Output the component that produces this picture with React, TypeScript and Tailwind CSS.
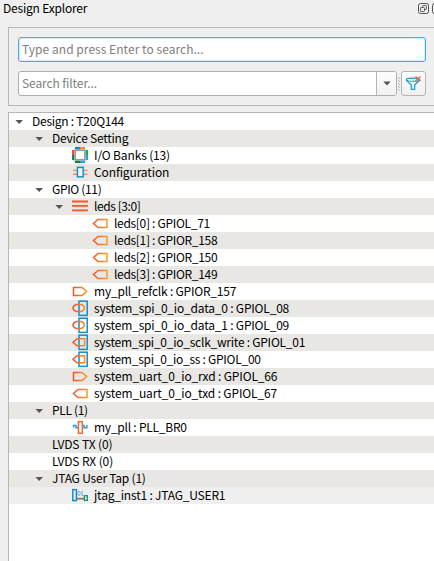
import React from 'react';

type IconName = 'banks' | 'config' | 'bus' | 'out' | 'in' | 'inoutReg' | 'outReg' | 'pll' | 'jtag';

type Item = { label: string; pad: string; arrow?: boolean; icon?: IconName; track: string; current?: boolean };

const items: Item[] = [
  { label: 'Design : T20Q144', pad: 'pl-[5px]', track: 'tracking-[-0.25px]', arrow: true },
  { label: 'Device Setting', pad: 'pl-[25px]', track: 'tracking-[-0.24px]', arrow: true },
  { label: 'I/O Banks (13)', pad: 'pl-[45px]', track: 'tracking-[-0.14px]', icon: 'banks' },
  { label: 'Configuration', pad: 'pl-[45px]', track: 'tracking-[-0.12px]', icon: 'config' },
  { label: 'GPIO (11)', pad: 'pl-[25px]', track: 'tracking-[-0.34px]', arrow: true },
  { label: 'leds [3:0]', pad: 'pl-[45px]', track: 'tracking-[-0.43px]', arrow: true, icon: 'bus' },
  { label: 'leds[0] : GPIOL_71', pad: 'pl-[65px]', track: 'tracking-[-0.31px]', icon: 'out' },
  { label: 'leds[1] : GPIOR_158', pad: 'pl-[65px]', track: 'tracking-[-0.31px]', icon: 'out' },
  { label: 'leds[2] : GPIOR_150', pad: 'pl-[65px]', track: 'tracking-[-0.31px]', icon: 'out' },
  { label: 'leds[3] : GPIOR_149', pad: 'pl-[65px]', track: 'tracking-[-0.31px]', icon: 'out' },
  { label: 'my_pll_refclk : GPIOR_157', pad: 'pl-[45px]', track: 'tracking-[-0.21px]', icon: 'in' },
  { label: 'system_spi_0_io_data_0 : GPIOL_08', pad: 'pl-[45px]', track: 'tracking-[-0.2px]', icon: 'inoutReg' },
  { label: 'system_spi_0_io_data_1 : GPIOL_09', pad: 'pl-[45px]', track: 'tracking-[-0.2px]', icon: 'inoutReg' },
  { label: 'system_spi_0_io_sclk_write : GPIOL_01', pad: 'pl-[45px]', track: 'tracking-[-0.25px]', icon: 'outReg' },
  { label: 'system_spi_0_io_ss : GPIOL_00', pad: 'pl-[45px]', track: 'tracking-[-0.27px]', icon: 'outReg' },
  { label: 'system_uart_0_io_rxd : GPIOL_66', pad: 'pl-[45px]', track: 'tracking-[-0.15px]', icon: 'in' },
  { label: 'system_uart_0_io_txd : GPIOL_67', pad: 'pl-[45px]', track: 'tracking-[-0.15px]', icon: 'out' },
  { label: 'PLL (1)', pad: 'pl-[25px]', track: 'tracking-[-0.33px]', arrow: true },
  { label: 'my_pll : PLL_BR0', pad: 'pl-[45px]', track: 'tracking-[-0.24px]', icon: 'pll' },
  { label: 'LVDS TX (0)', pad: 'pl-[25px]', track: 'tracking-[-0.12px]' },
  { label: 'LVDS RX (0)', pad: 'pl-[25px]', track: 'tracking-[-0.12px]' },
  { label: 'JTAG User Tap (1)', pad: 'pl-[25px]', track: 'tracking-[-0.21px]', arrow: true },
  { label: 'jtag_inst1 : JTAG_USER1', pad: 'pl-[45px]', track: 'tracking-[-0.2px]', icon: 'jtag', current: true },
];

function Glyph({ name }: { name: IconName }) {
  switch (name) {
    case 'banks':
      return (
        <>
          <rect x="1" y="1" width="14" height="14" fill="#e4ebea" />
          <path d="M3 1.2h5" stroke="#1b7fc4" strokeWidth="2.4" />
          <path d="M8 1.2h5" stroke="#f08a2c" strokeWidth="2.4" />
          <path d="M1.2 3v5" stroke="#f0502c" strokeWidth="2.4" />
          <path d="M1.2 8v5" stroke="#158a56" strokeWidth="2.4" />
          <path d="M14.8 3v5" stroke="#10b050" strokeWidth="2.4" />
          <path d="M14.8 8v5" stroke="#18a8dc" strokeWidth="2.4" />
          <path d="M3 14.8h5" stroke="#158040" strokeWidth="2.4" />
          <path d="M8 14.8h5" stroke="#18a8dc" strokeWidth="2.4" />
          <rect x="3.3" y="3.3" width="9.4" height="9.4" fill="#fff" stroke="#9b9b9b" strokeWidth="1.5" />
        </>
      );
    case 'config':
      return (
        <>
          <path d="M1 6.4h4M1 10.3h4M11.4 6.4h4M11.4 10.3h4" stroke="#f58a63" strokeWidth="1.4" />
          <rect x="5.4" y="3.4" width="5.8" height="9.4" fill="#eef2f1" stroke="#1595c9" strokeWidth="1.5" />
          <path d="M5 3.4h6.6" stroke="#3a7fa5" />
        </>
      );
    case 'bus':
      return <path d="M0 3.5h16M0 7.9h16M0 12.3h16" stroke="#f4582a" strokeWidth="1.8" />;
    case 'out':
      return <path d="M15 4.5v8H6L1.5 8.5 6 4.5z" stroke="url(#orange)" strokeWidth="1.5" />;
    case 'in':
      return <path d="M1.5 4.5v8H10l4.7-4-4.7-4z" stroke="url(#orange)" strokeWidth="1.5" />;
    case 'inoutReg':
      return (
        <>
          <rect x="7" y="1.2" width="8.2" height="14.2" stroke="#168dc0" strokeWidth="1.5" />
          <path d="M4.4 4.5h4.8q3 1 3.2 3.5-.2 2.5-3.2 3.5H4.4Q1.2 10.5 1 8q.2-2.5 3.4-3.5z" stroke="url(#orange)" strokeWidth="1.5" />
        </>
      );
    case 'outReg':
      return (
        <>
          <rect x="7" y="1.2" width="8.2" height="14.2" stroke="#168dc0" strokeWidth="1.5" />
          <path d="M12.6 4.8v7H5L1 8.3l4-3.5z" stroke="url(#orange)" strokeWidth="1.5" />
        </>
      );
    case 'pll':
      return (
        <>
          <path d="M1.5 8.6V6.6H4v2.2h2.4M10 6.6h2v2.2h2.8V6" stroke="#22a3cc" strokeWidth="1.5" />
          <rect x="6.4" y="2.7" width="3.9" height="11.6" fill="#fff" stroke="#f36a2c" strokeWidth="1.5" />
        </>
      );
    case 'jtag':
      return (
        <>
          <rect x=".8" y="2.6" width="3.6" height="11" stroke="#168dc8" strokeWidth="1.5" />
          <path d="M5 11.7h7" stroke="#a96b61" strokeWidth="1.8" />
          <rect x="12.4" y="8.7" width="2.9" height="4.7" stroke="#159078" strokeWidth="1.3" />
          <ellipse cx="7" cy="6.3" rx="1.2" ry="2.3" stroke="#66aed3" strokeWidth=".9" />
          <path d="M9.2 5l1-.8v4.5M9.2 8.6h2" stroke="#66aed3" strokeWidth=".9" />
        </>
      );
  }
}

function Row({ item, index }: { item: Item; index: number }) {
  const bg = item.current ? 'bg-[#efefef]' : index % 2 ? 'bg-[#e8e7e3]' : 'bg-white';
  return (
    <div className={`flex h-[17px] shrink-0 items-center ${bg} ${item.pad}`}>
      <span className="flex w-[18px] shrink-0 items-center">
        {item.arrow && (
          <svg width="10" height="6" viewBox="0 0 10 6" className="shrink-0">
            <path d="M1.4 1h7.6L5.2 5z" fill="#555" />
          </svg>
        )}
      </span>
      {item.icon && (
        <svg width="16" height="17" viewBox="0 0 16 17" fill="none" className="mr-[6px] shrink-0">
          <Glyph name={item.icon} />
        </svg>
      )}
      <span className={`pb-[2px] leading-[15px] whitespace-pre ${item.track}`}>{item.label}</span>
    </div>
  );
}

export default function App() {
  return (
    <div className="flex h-[561px] w-[434px] flex-col overflow-hidden bg-[#efefef] font-['Noto_Sans_CJK_SC','Noto_Sans',sans-serif] text-[12px] text-black">
      <svg width="0" height="0" className="absolute">
        <defs>
          <linearGradient id="orange" gradientUnits="userSpaceOnUse" x1="1" y1="0" x2="15" y2="0">
            <stop stopColor="#f0522c" />
            <stop offset="1" stopColor="#f89a2e" />
          </linearGradient>
        </defs>
      </svg>
      <header className="flex h-[27px] shrink-0 items-start justify-between pl-[3px]">
        <span className="leading-[15px] tracking-[-0.2px]">Design Explorer</span>
        <div className="flex w-[16px] shrink-0 gap-[3px] overflow-hidden pt-[3px]">
          <svg width="11" height="11" viewBox="0 0 11 11" fill="none" stroke="#555" className="shrink-0">
            <rect x=".5" y=".5" width="10" height="10" rx="2" />
            <rect x="4.5" y="2.5" width="4" height="4" rx=".8" />
            <rect x="2.5" y="4.5" width="4" height="4" rx=".8" fill="#efefef" />
          </svg>
          <svg width="11" height="11" viewBox="0 0 11 11" fill="none" stroke="#555" className="shrink-0">
            <rect x=".5" y=".5" width="10" height="10" rx="2" />
            <path d="M3 3l5 5M8 3L3 8" />
          </svg>
        </div>
      </header>
      <section className="ml-[8px] flex h-[79px] shrink-0 flex-col gap-[9px] border-y border-l border-[#b6b6b6] pt-[9px] pr-[8px] pl-[9px]">
        <div className="flex h-[25px] shrink-0 items-center rounded-[3px] border border-[#3daee9] bg-white pl-[3px] text-[#808080] shadow-[inset_0_0_0_1px_#d7edff]">
          <span className="pb-[2px] leading-[17px] tracking-[0.04px]">Type and press Enter to search...</span>
        </div>
        <div className="flex h-[25px] shrink-0">
          <div className="flex w-[379px] shrink-0 items-stretch overflow-hidden rounded-[3px] border border-[#aeaeae] bg-white">
            <span className="flex flex-1 items-center pb-[2px] pl-[3px] leading-[17px] tracking-[-0.1px] text-[#808080]">Search filter...</span>
            <span className="flex w-[20px] items-center justify-center border-l border-[#b6b6b6] bg-gradient-to-b from-[#fdfdfd] to-[#f1f1f1]">
              <svg width="8" height="5" viewBox="0 0 8 5"><path d="M.3.5h7.4L4 4.5z" fill="#555" /></svg>
            </span>
          </div>
          <svg width="4" height="25" className="shrink-0">
            <path d="M1.5 6v14M2.5 7v14" stroke="#b4b4b4" strokeDasharray="1 2" />
          </svg>
          <button className="flex w-[25px] items-center justify-center rounded-[3px] border border-[#b4b4b4] bg-gradient-to-b from-[#fdfdfd] to-[#f0f0f0]">
            <svg width="17" height="17" viewBox="0 0 17 17" fill="none">
              <path d="M1.2 5l5.2 5v4.4h3.2V10l5.2-5" stroke="#20a7cd" strokeWidth="1.4" />
              <ellipse cx="8" cy="4.7" rx="6.8" ry="1.6" stroke="#1893b4" strokeWidth="1.1" />
              <path d="M10.5 1.5l5 4.6M15.5 1.5l-5 4.6" stroke="#ef6048" strokeWidth="1.3" />
            </svg>
          </button>
        </div>
      </section>
      <main className="mt-[6px] ml-[8px] flex min-h-0 flex-1 flex-col border-t border-l border-[#b6b6b6] bg-white">
        {items.map((item, i) => <Row key={item.label} item={item} index={i} />)}
      </main>
    </div>
  );
}
